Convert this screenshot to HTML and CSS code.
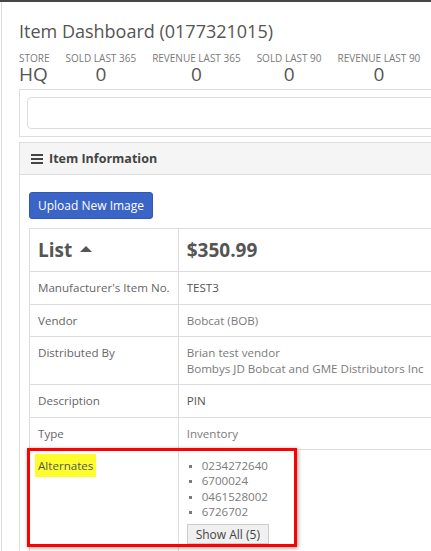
FILE: index.html
```html
<!DOCTYPE html>
<html>
<head>
<meta charset="utf-8">
<link rel="stylesheet" href="styles.css">
</head>
<body>
<div class="topbar"></div>
<div class="page">
  <h1 class="title">Item Dashboard (0177321015)</h1>
  <div class="stats">
    <div class="stat stat-left"><div class="stat-label">Store</div><div class="stat-value">HQ</div></div>
    <div class="stat"><div class="stat-label">Sold Last 365</div><div class="stat-value">0</div></div>
    <div class="stat"><div class="stat-label">Revenue Last 365</div><div class="stat-value">0</div></div>
    <div class="stat"><div class="stat-label">Sold Last 90</div><div class="stat-value">0</div></div>
    <div class="stat"><div class="stat-label">Revenue Last 90</div><div class="stat-value">0</div></div>
  </div>
  <div class="box">
    <div class="box-inner"></div>
  </div>
  <div class="panel">
    <div class="panel-heading">
      <svg class="menu-icon" width="12" height="10" viewBox="0 0 12 10"><rect x="0" y="0" width="12" height="2" fill="#444"/><rect x="0" y="4" width="12" height="2" fill="#444"/><rect x="0" y="8" width="12" height="2" fill="#444"/></svg>
      <span>Item Information</span>
    </div>
    <div class="panel-body">
      <button class="btn-primary">Upload New Image</button>
      <table class="info">
        <tr class="price-row"><td class="col-label">List <span class="caret"></span></td><td>$350.99</td></tr>
        <tr><td class="col-label">Manufacturer's Item No.</td><td>TEST3</td></tr>
        <tr><td class="col-label">Vendor</td><td class="soft">Bobcat (BOB)</td></tr>
        <tr><td class="col-label">Distributed By</td><td class="soft">Brian test vendor<br>Bombys JD Bobcat and GME Distributors Inc</td></tr>
        <tr><td class="col-label">Description</td><td>PIN</td></tr>
        <tr><td class="col-label">Type</td><td class="soft">Inventory</td></tr>
        <tr class="alt-row">
          <td class="col-label"><span class="marker">Alternates</span></td>
          <td class="soft">
            <ul class="alts">
              <li>0234272640</li>
              <li>6700024</li>
              <li>0461528002</li>
              <li>6726702</li>
            </ul>
            <button class="btn-default">Show All (5)</button>
          </td>
        </tr>
      </table>
      <div class="callout"></div>
    </div>
  </div>
</div>
</body>
</html>
```
FILE: styles.css
```css
html, body {
  margin: 0;
  padding: 0;
  background: #fff;
  overflow: hidden;
}
body {
  font-family: "Open Sans", "Liberation Sans", sans-serif;
  color: #555;
  width: 431px;
  height: 551px;
}
.topbar {
  height: 2px;
  background: #464646;
}
.page {
  margin-left: 1px;
  border-left: 1px solid #dcdcdc;
  padding-left: 17px;
  width: 640px;
  height: 560px;
}
.title {
  margin: 0;
  padding-top: 17px;
  font-size: 18px;
  font-weight: 400;
  line-height: 25px;
  color: #555;
}
.stats {
  display: flex;
  gap: 16px;
  margin-top: 7px;
}
.stat {
  text-align: center;
}
.stat-left { text-align: left; }
.stat-label {
  font-size: 10px;
  line-height: 14px;
  text-transform: uppercase;
  color: #7a7a7a;
}
.stat-value {
  font-size: 19px;
  line-height: 19px;
  color: #555;
}
.box {
  margin-top: 5px;
  border: 1px solid #ddd;
  padding: 7px;
}
.box-inner {
  height: 30px;
  border: 1px solid #ddd;
  border-radius: 4px;
}
.panel {
  margin-top: 5px;
  border: 1px solid #ddd;
}
.panel-heading {
  display: flex;
  align-items: center;
  gap: 6px;
  height: 31px;
  padding-left: 11px;
  background: #f5f5f5;
  border-bottom: 1px solid #ddd;
  font-size: 12.5px;
  font-weight: 700;
  color: #444;
}
.menu-icon { display: block; }
.panel-body {
  position: relative;
  padding: 16px 9px;
}
.btn-primary {
  display: block;
  margin-top: 1px;
  font-family: inherit;
  font-size: 12px;
  color: #fff;
  background: #3a64c6;
  border: 1px solid #3158b6;
  border-radius: 3px;
  height: 27px;
  padding: 0 8px;
}
.info {
  margin-top: 9px;
  border-collapse: collapse;
  width: 100%;
  font-size: 11.6px;
  border: 1px solid #ddd;
}
.info td {
  border: 1px solid #ddd;
  padding: 8px 8px 8px;
  line-height: 15.5px;
  vertical-align: top;
}
.info td.col-label {
  width: 131px;
  white-space: nowrap;
  color: #666;
}
.info td.soft { color: #7b7b7b; }
.price-row td {
  font-size: 19px;
  font-weight: 700;
  line-height: 26px;
  color: #555 !important;
}
.caret {
  display: inline-block;
  width: 0;
  height: 0;
  border-left: 6px solid transparent;
  border-right: 6px solid transparent;
  border-bottom: 6px solid #555;
  vertical-align: middle;
  margin-left: 3px;
  position: relative;
  top: -3px;
}
.marker {
  background: #fdfd2e;
  color: #555;
  padding: 4px 3px;
  margin-left: -3px;
}
.alts {
  margin: 0;
  padding-left: 15px;
  list-style: square;
  line-height: 15.3px;
}
.alts li::marker { font-size: 8px; }
.btn-default {
  margin-top: 5px;
  font-family: inherit;
  font-size: 12px;
  color: #444;
  background: #f0f0f0;
  border: 1px solid #ccc;
  border-radius: 0;
  height: 20px;
  padding: 0 8px;
}
/* red annotation frame around the Alternates row */
.callout {
  position: absolute;
  left: 7px;
  top: 273px;
  width: 264px;
  height: 93px;
  border: 3px solid #f00;
  box-shadow: 1px 1px 4px rgba(0,0,0,0.4);
  pointer-events: none;
}
```
